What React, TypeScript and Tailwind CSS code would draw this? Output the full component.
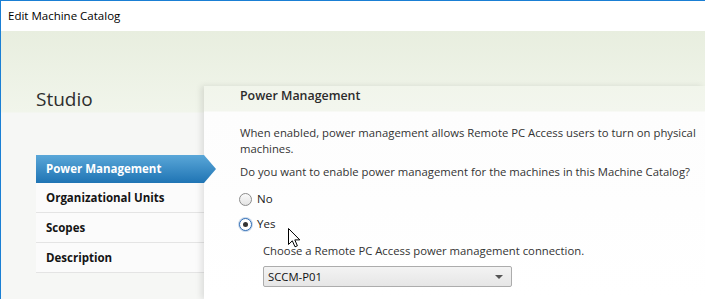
const navItems = ['Power Management', 'Organizational Units', 'Scopes', 'Description']

function Radio({ checked, label }: { checked?: boolean; label: string }) {
  return (
    <div className="flex items-center h-[20px] -ml-[1px]">
      {checked ? (
        <span className="w-[13px] h-[13px] rounded-full border border-[#2f6db5] bg-white flex items-center justify-center shadow-[0_0_0_1px_rgba(47,109,181,0.25)]">
          <span className="w-[5px] h-[5px] rounded-full bg-[#333]" />
        </span>
      ) : (
        <span className="w-[13px] h-[13px] rounded-full border border-[#8c8c8c] bg-[linear-gradient(to_bottom,#fafafa,#e3e3e3)]" />
      )}
      <span className="ml-[5px] text-[11.5px] text-[#222]">{label}</span>
    </div>
  )
}

function Cursor() {
  return (
    <svg className="absolute left-[84px] top-[142px]" width="13" height="20" viewBox="0 0 13 20">
      <path d="M0.5 0.5 L0.5 16.5 L4.3 12.8 L7 18.8 L9.4 17.8 L6.8 11.9 L11.8 11.9 Z" fill="#fff" stroke="#000" strokeWidth="1" strokeLinejoin="miter" />
    </svg>
  )
}

export default function App() {
  const active = 0
  return (
    <div className="w-[705px] h-[299px] overflow-hidden bg-white border-t border-l border-[#1a7fd4] flex flex-col font-['Segoe_UI','Open_Sans',sans-serif] text-[#262626]">
      <div className="h-[30px] shrink-0 flex items-center pl-[7px] text-[11.5px] text-black">Edit Machine Catalog</div>
      <div className="flex-1 flex bg-[linear-gradient(to_bottom,#e8eedf_0px,#f1f5eb_81px,#f6f7f5_82px,#f6f7f5_100%)]">
        <aside className="w-[203px] shrink-0 pl-[35px]">
          <div className="pt-[55px] h-[82px] text-[19px] leading-[26px] text-[#2e2e2e]">Studio</div>
          <nav className="mt-[42px] w-[168px]">
            {navItems.map((item, i) =>
              i === active ? (
                <div
                  key={item}
                  className="relative z-10 h-[28px] flex items-center pl-[10px] font-bold text-[11.5px] text-white bg-[linear-gradient(to_bottom,#5aa7d8,#1f74b4)]"
                >
                  {item}
                  <span className="absolute top-0 right-[-12px] w-[12px] h-[28px] bg-[linear-gradient(to_bottom,#5aa7d8,#1f74b4)] [clip-path:polygon(0_0,100%_50%,0_100%)]" />
                </div>
              ) : (
                <div
                  key={item}
                  className="h-[30px] flex items-center pl-[10px] font-bold text-[11.5px] text-[#141414] bg-[#fbfbfb] border-b border-[#e4e4e4]"
                >
                  {item}
                </div>
              )
            )}
          </nav>
        </aside>
        <main className="relative flex-1 mt-[55px] pl-[36px] shadow-[-3px_0_6px_rgba(0,0,0,0.10)] bg-[linear-gradient(to_bottom,#f1f5eb_0px,#f3f6ee_25px,#fdfdfd_26px,#ffffff_100%)] text-[11.3px] leading-[16px]">
          <div className="h-[26px] pt-[2px] font-semibold text-[12.4px] text-[#2b2b2b]">Power Management</div>
          <p className="mt-[13px] text-[#333] pr-[4px]">
            When enabled, power management allows Remote PC Access users to turn on physical machines.
          </p>
          <p className="mt-[7px] text-[#333]">Do you want to enable power management for the machines in this Machine Catalog?</p>
          <div className="mt-[9px] flex flex-col gap-[5px]">
            <Radio label="No" />
            <Radio label="Yes" checked />
          </div>
          <div className="ml-[23px]">
            <p className="mt-[9px] text-[#333]">Choose a Remote PC Access power management connection.</p>
            <div className="mt-[7px] w-[249px] h-[21px] rounded-[2px] border border-[#acacac] bg-[linear-gradient(to_bottom,#f3f3f3,#e6e6e6)] flex items-center justify-between pl-[4px] pr-[8px]">
              <span className="text-[11.3px] text-[#111]">SCCM-P01</span>
              <span className="w-0 h-0 border-l-[4px] border-r-[4px] border-t-[4px] border-l-transparent border-r-transparent border-t-[#555]" />
            </div>
          </div>
          <Cursor />
        </main>
      </div>
    </div>
  )
}
